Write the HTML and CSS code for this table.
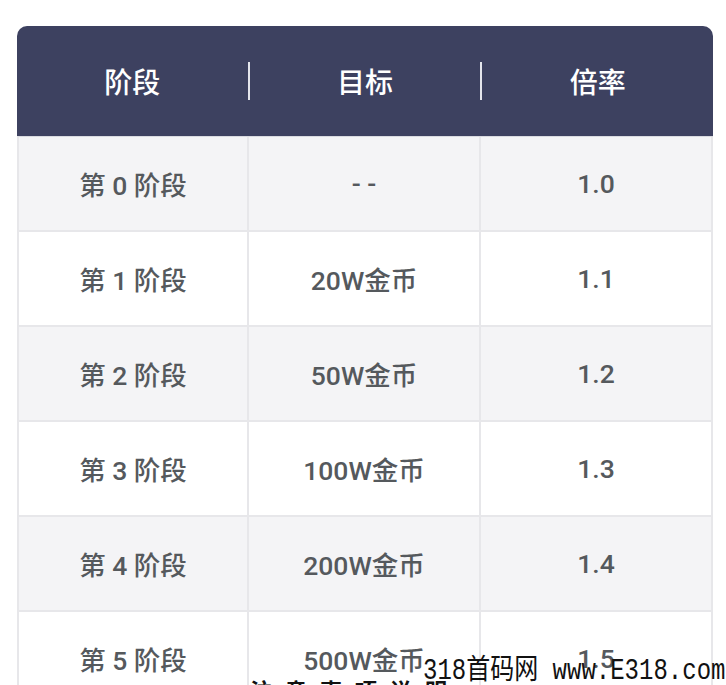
FILE: index.html
```html
<!DOCTYPE html>
<html lang="zh-CN">
<head>
<meta charset="utf-8">
<title>阶段倍率</title>
<link rel="stylesheet" href="styles.css">
</head>
<body>
<div class="page">
  <div class="table">
    <div class="head">
      <div class="hcell">阶段</div>
      <div class="hsep"></div>
      <div class="hcell">目标</div>
      <div class="hsep"></div>
      <div class="hcell">倍率</div>
    </div>
    <div class="body">
      <div class="cell alt">第 0 阶段</div><div class="cell alt">- -</div><div class="cell alt">1.0</div>
      <div class="cell">第 1 阶段</div><div class="cell">20W金币</div><div class="cell">1.1</div>
      <div class="cell alt">第 2 阶段</div><div class="cell alt">50W金币</div><div class="cell alt">1.2</div>
      <div class="cell">第 3 阶段</div><div class="cell">100W金币</div><div class="cell">1.3</div>
      <div class="cell alt">第 4 阶段</div><div class="cell alt">200W金币</div><div class="cell alt">1.4</div>
      <div class="cell">第 5 阶段</div><div class="cell">500W金币</div><div class="cell">1.5</div>
    </div>
  </div>
  <div class="cut">注 意 事 项 说 明</div>
  <div class="watermark">318首码网 www.E318.com</div>
</div>
</body>
</html>
```
FILE: styles.css
```css
html, body {
  margin: 0;
  padding: 0;
  background: #ffffff;
}
.page {
  position: relative;
  width: 726px;
  height: 685px;
  overflow: hidden;
  font-family: Roboto, "Noto Sans CJK SC", sans-serif;
}
.table {
  margin: 26px 0 0 17px;
  width: 696px;
}
.head {
  height: 110px;
  background: #3d4160;
  border-radius: 10px 10px 0 0;
  display: grid;
  grid-template-columns: 1fr 2px 1fr 2px 1fr;
  align-items: center;
  color: #ffffff;
  font-size: 28px;
  font-weight: 500;
}
.hcell {
  text-align: center;
}
.hsep {
  height: 38px;
  background: #e4e5ec;
}
.body {
  display: grid;
  grid-template-columns: 230px 232px 232px;
  border-left: 2px solid #e7e7ea;
  border-top: 1px solid #d9dae0;
}
.cell {
  height: 93px;
  border-right: 2px solid #e7e7ea;
  border-bottom: 2px solid #e7e7ea;
  display: flex;
  align-items: center;
  justify-content: center;
  font-size: 26.5px;
  font-weight: 500;
  color: #55595d;
  background: #ffffff;
}
.cell.alt {
  background: #f4f4f6;
}
.cut {
  position: absolute;
  left: 250px;
  top: 678px;
  font-family: "Noto Sans CJK SC", sans-serif;
  font-weight: 700;
  font-size: 22px;
  line-height: 22px;
  color: #111111;
  letter-spacing: 4px;
}
.watermark {
  position: absolute;
  left: 423px;
  top: 654px;
  font-family: "Liberation Mono", "Noto Sans CJK SC", monospace;
  font-size: 24px;
  line-height: 30px;
  color: #111111;
  white-space: nowrap;
  transform: scaleY(1.2);
  transform-origin: left top;
}
```
